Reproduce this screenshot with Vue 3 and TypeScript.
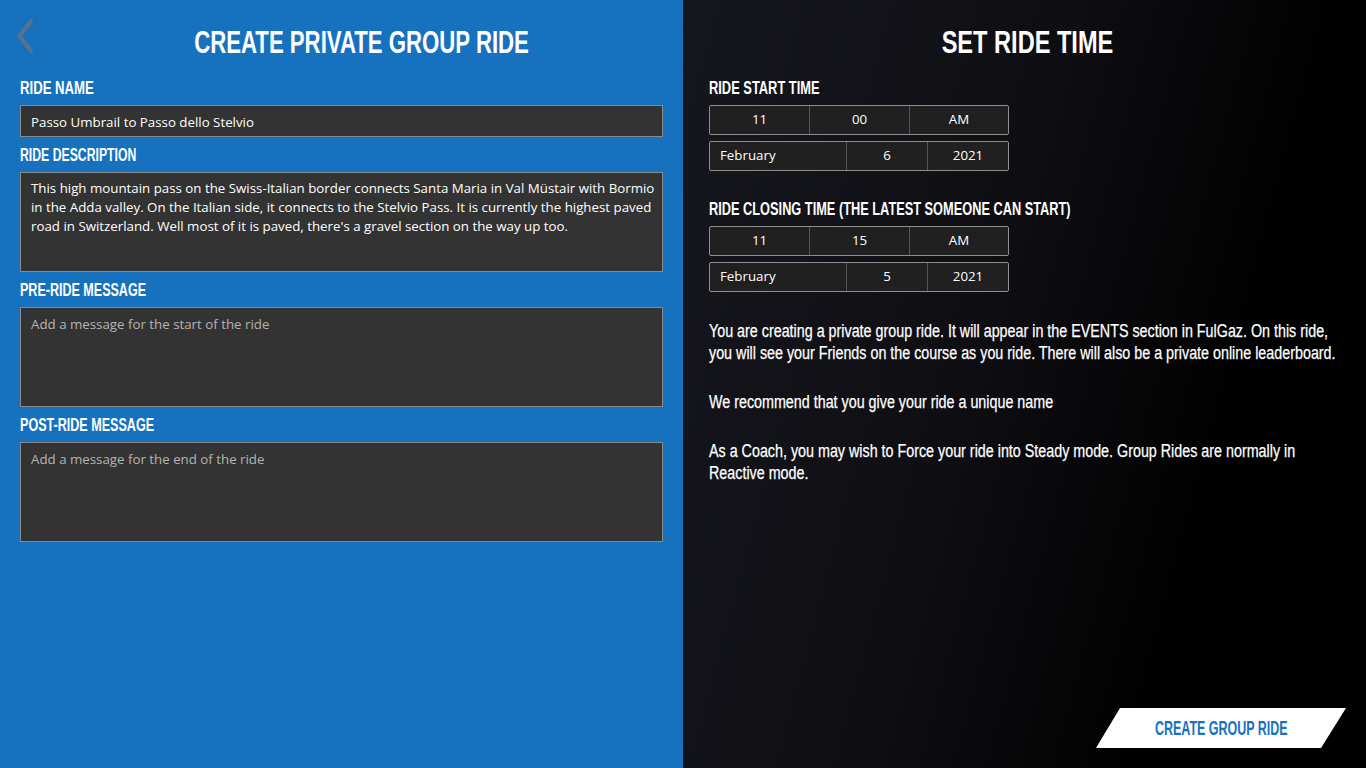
<script setup lang="ts">
interface Field { label: string; fit: number; text: string; placeholder: boolean; tall: boolean }
const fields: Field[] = [
  { label: 'RIDE NAME', fit: 0.73, text: 'Passo Umbrail to Passo dello Stelvio', placeholder: false, tall: false },
  { label: 'RIDE DESCRIPTION', fit: 0.68, text: "This high mountain pass on the Swiss-Italian border connects Santa Maria in Val Müstair with Bormio in the Adda valley. On the Italian side, it connects to the Stelvio Pass. It is currently the highest paved road in Switzerland. Well most of it is paved, there's a gravel section on the way up too.", placeholder: false, tall: true },
  { label: 'PRE-RIDE MESSAGE', fit: 0.696, text: 'Add a message for the start of the ride', placeholder: true, tall: true },
  { label: 'POST-RIDE MESSAGE', fit: 0.698, text: 'Add a message for the end of the ride', placeholder: true, tall: true },
]
const times = [
  { label: 'RIDE START TIME', fit: 0.715, time: ['11', '00', 'AM'], day: '6' },
  { label: 'RIDE CLOSING TIME (THE LATEST SOMEONE CAN START)', fit: 0.71, time: ['11', '15', 'AM'], day: '5' },
]
</script>

<template>
  <div class="page">
    <section class="left">
      <svg class="back" width="20" height="36" viewBox="0 0 20 36" fill="none">
        <path d="M15 3 L3.5 18 L15 33" stroke="#5f6f85" stroke-width="4" stroke-linecap="round" stroke-linejoin="round" />
      </svg>
      <h1 class="title left-title"><span>CREATE PRIVATE GROUP RIDE</span></h1>
      <div v-for="f in fields" :key="f.label" class="field">
        <div class="label" :style="{ transform: `scaleX(${f.fit})` }">{{ f.label }}</div>
        <div class="box" :class="{ tall: f.tall, ph: f.placeholder }">{{ f.text }}</div>
      </div>
    </section>
    <section class="right">
      <h1 class="title right-title"><span>SET RIDE TIME</span></h1>
      <div v-for="t in times" :key="t.label" class="time-block">
        <div class="label" :style="{ transform: `scaleX(${t.fit})` }">{{ t.label }}</div>
        <div class="picker time">
          <span v-for="v in t.time" :key="v">{{ v }}</span>
        </div>
        <div class="picker date">
          <span class="month">February</span>
          <span>{{ t.day }}</span>
          <span>2021</span>
        </div>
      </div>
      <div class="notes">
        <p>You are creating a private group ride. It will appear in the EVENTS section in FulGaz. On this ride, you will see your Friends on the course as you ride. There will also be a private online leaderboard.</p>
        <p>We recommend that you give your ride a unique name</p>
        <p>As a Coach, you may wish to Force your ride into Steady mode. Group Rides are normally in Reactive mode.</p>
      </div>
      <div class="spacer"></div>
      <div class="action"><span>CREATE GROUP RIDE</span></div>
    </section>
  </div>
</template>

<style>
html, body { margin: 0; background: #000; }
</style>

<style scoped>
.page {
  display: flex;
  width: 1366px;
  height: 768px;
  overflow: hidden;
  color: #fff;
  font-family: "Open Sans", "Noto Sans", sans-serif;
}
.left {
  position: relative;
  box-sizing: border-box;
  width: 683px;
  padding: 0 20px;
  background: #1672bf;
}
.right {
  box-sizing: border-box;
  width: 683px;
  padding: 0 26px 20px;
  display: flex;
  flex-direction: column;
  overflow: hidden;
  background: linear-gradient(105deg, #16171e 0%, #0e0e12 45%, #000 75%);
}
.back { position: absolute; left: 16px; top: 18px; }
.title {
  margin: 0;
  height: 78px;
  line-height: 85px;
  font-family: "Liberation Sans", sans-serif;
  font-weight: 700;
  font-size: 32px;
  white-space: nowrap;
  text-align: center;
}
.title span { display: inline-block; }
.left-title { padding-left: 40px; }
.left-title span { transform: scaleX(0.693); }
.right-title { padding-left: 6px; }
.right-title span { transform: scaleX(0.737); }
.label {
  height: 27px;
  line-height: 21px;
  font-family: "Liberation Sans", sans-serif;
  font-weight: 700;
  font-size: 18px;
  white-space: nowrap;
  transform-origin: left center;
}
.field { margin-bottom: 8px; }
.box {
  box-sizing: border-box;
  height: 32px;
  padding: 7px 6px 0 10px;
  border: 1px solid #8a8a8a;
  background: #333;
  font-size: 13.3px;
  line-height: 19px;
}
.box.tall { height: 100px; padding-top: 6px; }
.box.ph { color: #b4b4b4; padding-top: 7px; }
.time-block { margin-bottom: 28px; width: 640px; }
.picker {
  box-sizing: border-box;
  display: grid;
  width: 300px;
  height: 30px;
  border: 1px solid #8f8f8f;
  border-radius: 2px;
  background: #202020;
  font-size: 13.3px;
  line-height: 26px;
  text-align: center;
}
.picker span + span { border-left: 1px solid #555; }
.time { grid-template-columns: 99px 100px 1fr; margin-bottom: 6px; }
.date { grid-template-columns: 136px 81px 1fr; }
.month { text-align: left; padding-left: 10px; }
.notes {
  width: 796px;
  flex: none;
  transform: scaleX(0.795);
  transform-origin: left top;
  font-family: "Liberation Sans", sans-serif;
  font-size: 18px;
  line-height: 22px;
  -webkit-text-stroke: 0.25px #fff;
}
.notes p { margin: 0 0 27px; }
.spacer { flex: 1; }
.action {
  align-self: flex-end;
  width: 250px;
  height: 40px;
  margin-right: -6px;
  clip-path: polygon(24px 0, 100% 0, 225px 100%, 0 100%);
  background: #fff;
  color: #1672bf;
  font-family: "Liberation Sans", sans-serif;
  font-weight: 700;
  font-size: 20px;
  line-height: 40px;
  text-align: center;
}
.action span { display: inline-block; transform: scaleX(0.624); white-space: nowrap; }
</style>
